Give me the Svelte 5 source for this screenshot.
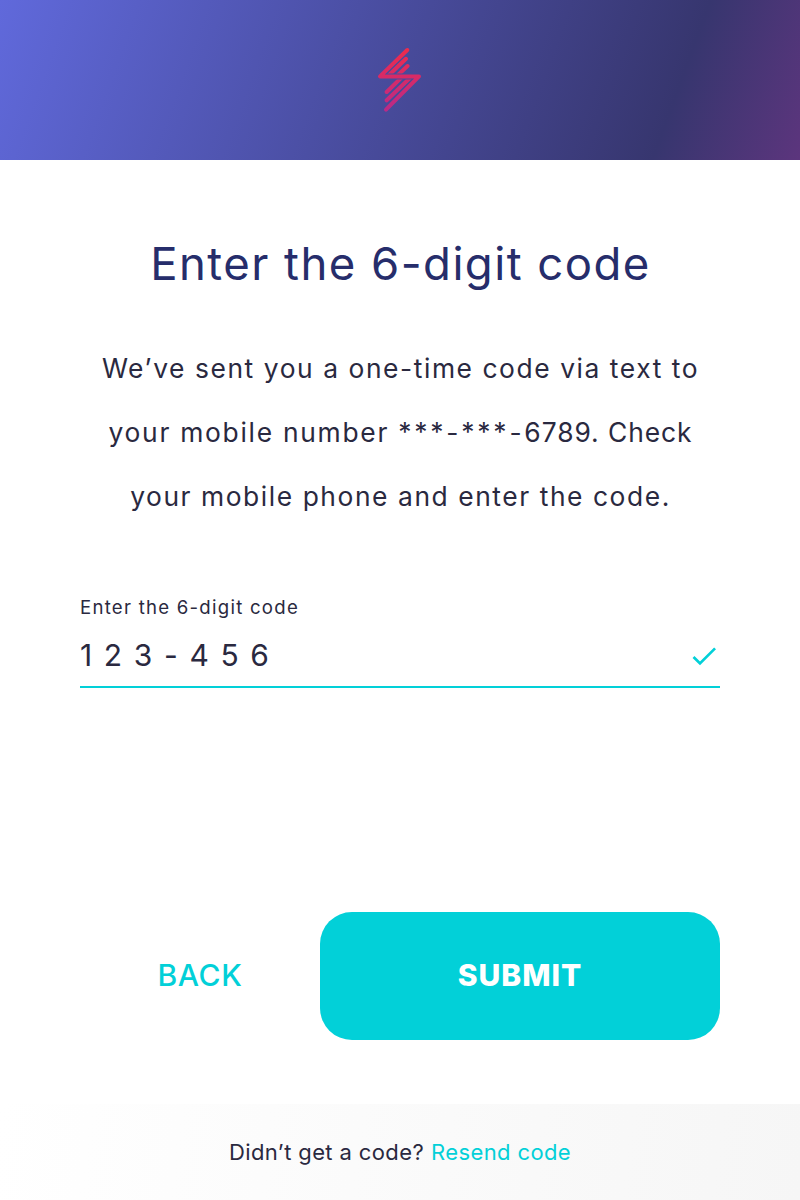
<script>
  const copyLines = [
    [{ text: 'We’ve sent you a one-time code via text to', spacing: 1.56 }],
    [
      { text: 'your mobile number ', spacing: 1.72 },
      { text: '***-***-', spacing: 2.82 },
      { text: '6789. Check', spacing: 0.94 }
    ],
    [{ text: 'your mobile phone and enter the code.', spacing: 1.56 }]
  ];
  let code = $state('1 2 3 - 4 5 6');
</script>

<main>
  <header>
    <svg width="48" height="68" viewBox="376 46 48 68" fill="none" stroke="url(#bolt)" stroke-width="4" stroke-linecap="round" stroke-linejoin="round">
      <defs>
        <linearGradient id="bolt" gradientUnits="userSpaceOnUse" x1="400" y1="46" x2="400" y2="114">
          <stop offset="0" stop-color="#f12b49" /><stop offset="1" stop-color="#b72a8b" />
        </linearGradient>
        <clipPath id="upper"><path d="M376 46H424V73.4H376Z" /></clipPath>
        <clipPath id="lower"><path d="M376 79.5H424V114H376Z" /></clipPath>
      </defs>
      <path d="M407.3 50L380 76.4H419L386 109.7" />
      <g clip-path="url(#upper)"><path d="M406 58.8L388 76M407.5 66L397 76" /></g>
      <g clip-path="url(#lower)"><path d="M386.7 100.3L411 77M386.7 92L402 77" /></g>
    </svg>
  </header>
  <section>
    <h1>Enter the 6-digit code</h1>
    <p class="copy">
      {#each copyLines as line}
        <span class="line">{#each line as part}<span style="letter-spacing: {part.spacing}px">{part.text}</span>{/each}</span>
      {/each}
    </p>
    <div class="field">
      <label for="code">Enter the 6-digit code</label>
      <div class="entry">
        <input id="code" bind:value={code} />
        <svg width="32" height="32" viewBox="0 0 24 24" fill="#02d0d8"><path d="M9 16.17L4.83 12l-1.42 1.41L9 19 21 7l-1.41-1.41z" /></svg>
      </div>
    </div>
    <div class="actions"><button class="back">BACK</button><button class="submit">SUBMIT</button></div>
  </section>
  <footer><span>Didn’t get a code?</span><a href="#resend">Resend code</a></footer>
</main>

<style>
  :global(body) { margin: 0; background: #fff; }
  main { width: 800px; height: 1200px; display: flex; flex-direction: column; font-family: Inter, sans-serif; color: #2a2940; overflow: hidden; }
  header { height: 160px; flex: none; display: flex; align-items: center; justify-content: center; background: linear-gradient(110deg, #6069db 0%, #37366f 82.8%, #5c357d 100%); }
  section { flex: 1; display: flex; flex-direction: column; padding: 76px 80px 64px; }
  h1 { margin: 0; padding-left: 1px; text-align: center; font-size: 45.5px; line-height: 56px; letter-spacing: 1.46px; font-weight: 400; color: #262d6b; white-space: nowrap; }
  .copy { margin: 44px 0 0; display: flex; flex-direction: column; align-items: center; font-size: 26.4px; line-height: 64px; }
  .line { display: block; white-space: pre; padding-left: 1px; }
  .field { margin-top: 67px; display: flex; flex-direction: column; }
  label { font-size: 18.6px; line-height: 24px; letter-spacing: 1.25px; }
  .entry { height: 69px; box-sizing: border-box; padding-top: 6px; border-bottom: 2px solid #02d0d8; display: flex; align-items: center; justify-content: space-between; }
  input { border: 0; padding: 0 0 1px; outline: 0; background: none; width: 400px; font: 400 30px Inter, sans-serif; letter-spacing: 1.6px; color: inherit; }
  .actions { margin-top: auto; display: flex; height: 128px; flex: none; }
  button { border: 0; padding: 0 0 2px; background: none; font: 500 30px Inter, sans-serif; color: #02d0d8; letter-spacing: .6px; }
  .back { width: 240px; }
  .submit { width: 400px; border-radius: 32px; background: #02d0d8; color: #fff; font-weight: 800; letter-spacing: 1px; }
  footer { height: 96px; flex: none; display: flex; gap: 7px; align-items: center; justify-content: center; background: linear-gradient(97deg, #fff, #f6f6f6); font-size: 22px; letter-spacing: .38px; }
  a { color: #02d0d8; text-decoration: none; }
</style>
